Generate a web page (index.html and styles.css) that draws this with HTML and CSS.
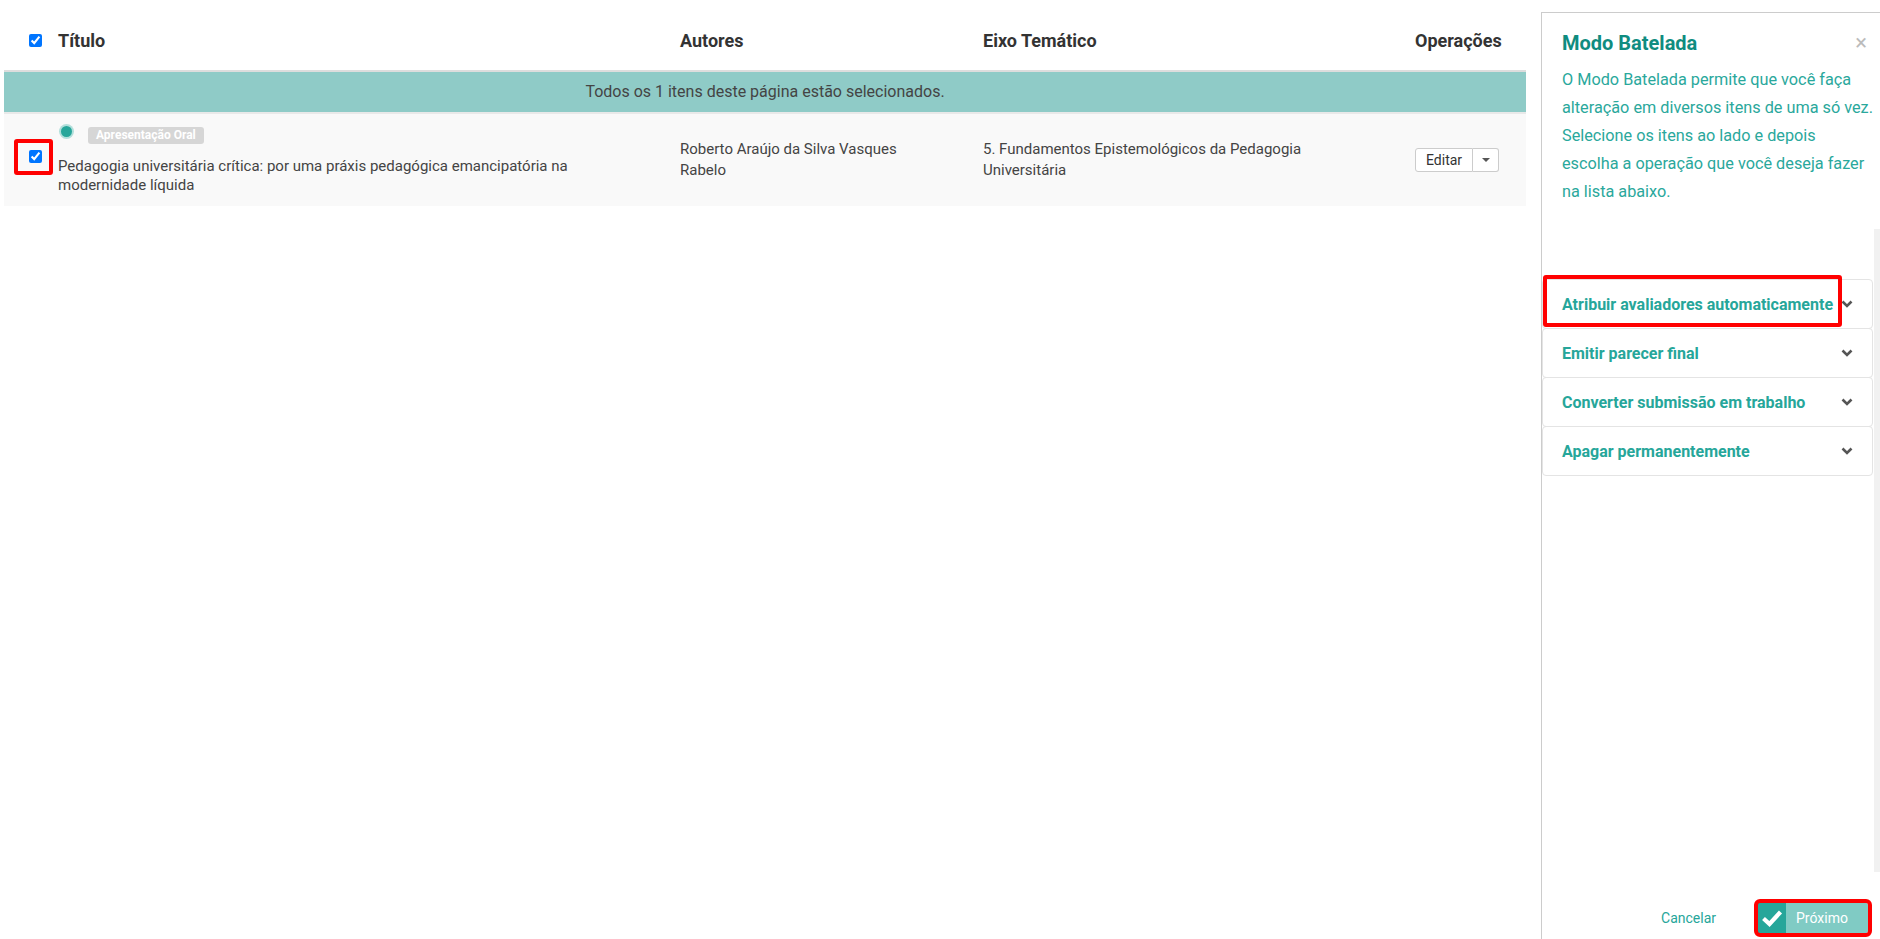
FILE: index.html
```html
<!DOCTYPE html>
<html lang="pt-BR">
<head>
  <meta charset="UTF-8">
  <title>Submissões - Modo Batelada</title>
  <link rel="stylesheet" href="styles.css">
</head>
<body>
<div class="page">
  <main class="list">
    <div class="grid head">
      <div class="cell check"><input type="checkbox" checked></div>
      <div class="cell">Título</div>
      <div class="cell">Autores</div>
      <div class="cell">Eixo Temático</div>
      <div class="cell">Operações</div>
    </div>

    <div class="select-all">Todos os 1 itens deste página estão selecionados.</div>

    <div class="grid row">
      <div class="cell check">
        <span class="mark"><input type="checkbox" checked></span>
      </div>
      <div class="cell title">
        <div class="meta">
          <span class="dot"></span>
          <span class="badge">Apresentação Oral</span>
        </div>
        <div>Pedagogia universitária crítica: por uma práxis pedagógica emancipatória na modernidade líquida</div>
      </div>
      <div class="cell text authors">Roberto Araújo da Silva Vasques Rabelo</div>
      <div class="cell text">5. Fundamentos Epistemológicos da Pedagogia Universitária</div>
      <div class="cell">
        <div class="btn-group">
          <button class="btn">Editar</button>
          <button class="btn caret-btn"><span class="caret"></span></button>
        </div>
      </div>
    </div>
  </main>

  <aside class="batch">
    <div class="batch-head">
      <h3>Modo Batelada</h3>
      <span class="close">×</span>
    </div>
    <p class="batch-desc">O Modo Batelada permite que você faça<br>alteração em diversos itens de uma só vez.<br>Selecione os itens ao lado e depois<br>escolha a operação que você deseja fazer<br>na lista abaixo.</p>

    <div class="batch-body">
      <div class="ops">
        <div class="op mark-op">
          <span>Atribuir avaliadores automaticamente</span>
          <svg class="chev" width="12" height="8" viewBox="0 0 12 8"><path d="M1.5 1.5 6 6l4.5-4.5" fill="none" stroke="#555" stroke-width="2.6"/></svg>
        </div>
        <div class="op">
          <span>Emitir parecer final</span>
          <svg class="chev" width="12" height="8" viewBox="0 0 12 8"><path d="M1.5 1.5 6 6l4.5-4.5" fill="none" stroke="#555" stroke-width="2.6"/></svg>
        </div>
        <div class="op">
          <span>Converter submissão em trabalho</span>
          <svg class="chev" width="12" height="8" viewBox="0 0 12 8"><path d="M1.5 1.5 6 6l4.5-4.5" fill="none" stroke="#555" stroke-width="2.6"/></svg>
        </div>
        <div class="op">
          <span>Apagar permanentemente</span>
          <svg class="chev" width="12" height="8" viewBox="0 0 12 8"><path d="M1.5 1.5 6 6l4.5-4.5" fill="none" stroke="#555" stroke-width="2.6"/></svg>
        </div>
      </div>
      <div class="track"></div>
    </div>

    <div class="batch-foot">
      <a class="cancel">Cancelar</a>
      <button class="next">
        <span class="next-icon">
          <svg width="22" height="18" viewBox="0 0 22 18"><path d="M2.5 9.5 8.5 15 19.5 3" fill="none" stroke="#fff" stroke-width="4.2"/></svg>
        </span>
        <span class="next-label">Próximo</span>
      </button>
    </div>
  </aside>
</div>
</body>
</html>
```

FILE: styles.css
```css
body {
  margin: 0;
  font-family: 'Roboto', 'Liberation Sans', sans-serif;
  color: #444;
  background: #fff;
  overflow: hidden;
}

.page {
  display: flex;
  height: 100vh;
}

/* lista de submissões */
.list {
  width: 1522px;
  padding: 10px 15px 0 4px;
}

.grid {
  display: grid;
  grid-template-columns: 54px 622px 303px 432px 111px;
  align-items: center;
}

.cell {
  padding-right: 40px;
}

.cell.check {
  padding: 0 0 0 25px;
  line-height: 0;
}

.cell:last-child {
  padding-right: 0;
}

.check input {
  width: 13px;
  height: 13px;
  margin: 0;
}

.head {
  height: 60px;
  border-bottom: 2px solid #ddd;
  font-size: 18px;
  font-weight: bold;
  color: #333;
}

.select-all {
  height: 40px;
  line-height: 40px;
  text-align: center;
  background-color: #8fcbc7;
  font-size: 16px;
  color: #444;
}

.row {
  height: 94px;
  border-top: 2px solid #e9e9e9;
  background-color: #f9f9f9;
  font-size: 15px;
  line-height: 21px;
  box-sizing: border-box;
}

.row .check {
  align-self: start;
  padding-top: 36px;
}

.title {
  line-height: 19px;
  padding-right: 52px;
}

.authors {
  padding-right: 50px;
}

.meta {
  display: flex;
  align-items: flex-start;
  gap: 16px;
  margin-bottom: 13px;
  line-height: 0;
}

.dot {
  width: 11px;
  height: 11px;
  margin: 0 0 0 3px;
  border-radius: 50%;
  background-color: #26a69a;
  box-shadow: 0 0 0 2px #b2dfdb;
}

.badge {
  padding: 0 8px;
  line-height: 17px;
  font-size: 12px;
  font-weight: bold;
  color: #fff;
  background-color: #d6d6d6;
  border-radius: 3px;
  margin-top: 1px;
}

/* realce em volta do checkbox */
.mark {
  position: relative;
  display: inline-block;
}

.mark::after {
  content: '';
  position: absolute;
  left: -15px;
  top: -11px;
  right: -11px;
  bottom: -12px;
  border: 4px solid #f00;
  border-radius: 3px;
}

.btn-group {
  display: flex;
}

.btn {
  height: 24px;
  padding: 0 10px;
  font-family: inherit;
  font-size: 14px;
  color: #333;
  background: #fff;
  border: 1px solid #ccc;
  border-radius: 3px 0 0 3px;
}

.caret-btn {
  width: 26px;
  padding: 0;
  border-left: none;
  border-radius: 0 3px 3px 0;
  display: flex;
  align-items: center;
  justify-content: center;
}

.caret {
  border-top: 4px solid #555;
  border-left: 4px solid transparent;
  border-right: 4px solid transparent;
}

/* painel lateral */
.batch {
  width: 338px;
  margin-top: 12px;
  border-left: 1px solid #ccc;
  border-top: 1px solid #ccc;
  display: flex;
  flex-direction: column;
  flex-shrink: 0;
}

.batch-head {
  display: flex;
  justify-content: space-between;
  align-items: center;
  padding: 18px 13px 0 20px;
}

.batch-head h3 {
  margin: 0;
  font-size: 20px;
  line-height: 24px;
  color: #0f8c80;
}

.close {
  font-size: 22px;
  line-height: 24px;
  color: #bbb;
}

.batch-desc {
  margin: 11px 0 23px;
  padding: 0 4px 0 20px;
  font-size: 16.25px;
  line-height: 28px;
  color: #2aa89c;
}

.batch-body {
  flex: 1;
  display: flex;
  min-height: 0;
}

.ops {
  flex: 1;
  padding-top: 50px;
  margin-right: 1px;
}

.track {
  width: 6px;
  background: #f1f1f1;
}

.op {
  position: relative;
  height: 50px;
  box-sizing: border-box;
  display: flex;
  justify-content: space-between;
  align-items: center;
  padding: 0 19px;
  margin-top: -1px;
  border: 1px solid #e4e4e4;
  border-radius: 4px;
  font-size: 16px;
  font-weight: bold;
  color: #26a69a;
}

.op:first-child {
  margin-top: 0;
}

.mark-op::after {
  content: '';
  position: absolute;
  left: 0;
  top: -5px;
  width: 299px;
  height: 52px;
  box-sizing: border-box;
  border: 4px solid #f00;
  border-radius: 3px;
}

.batch-foot {
  display: flex;
  justify-content: flex-end;
  align-items: center;
  gap: 42px;
  padding: 31px 12px 6px 0;
}

.cancel {
  font-size: 14px;
  color: #26a69a;
  cursor: pointer;
}

.next {
  display: flex;
  height: 30px;
  padding: 0;
  border: none;
  border-radius: 2px;
  font-family: inherit;
  outline: 4px solid #f00;
  outline-offset: 0;
  background: #80cbc4;
}

.next-icon {
  width: 28px;
  display: flex;
  align-items: center;
  justify-content: center;
  background-color: #26a69a;
}

.next-label {
  width: 82px;
  padding-left: 10px;
  box-sizing: border-box;
  text-align: left;
  line-height: 30px;
  font-size: 14px;
  color: #fff;
}
```
